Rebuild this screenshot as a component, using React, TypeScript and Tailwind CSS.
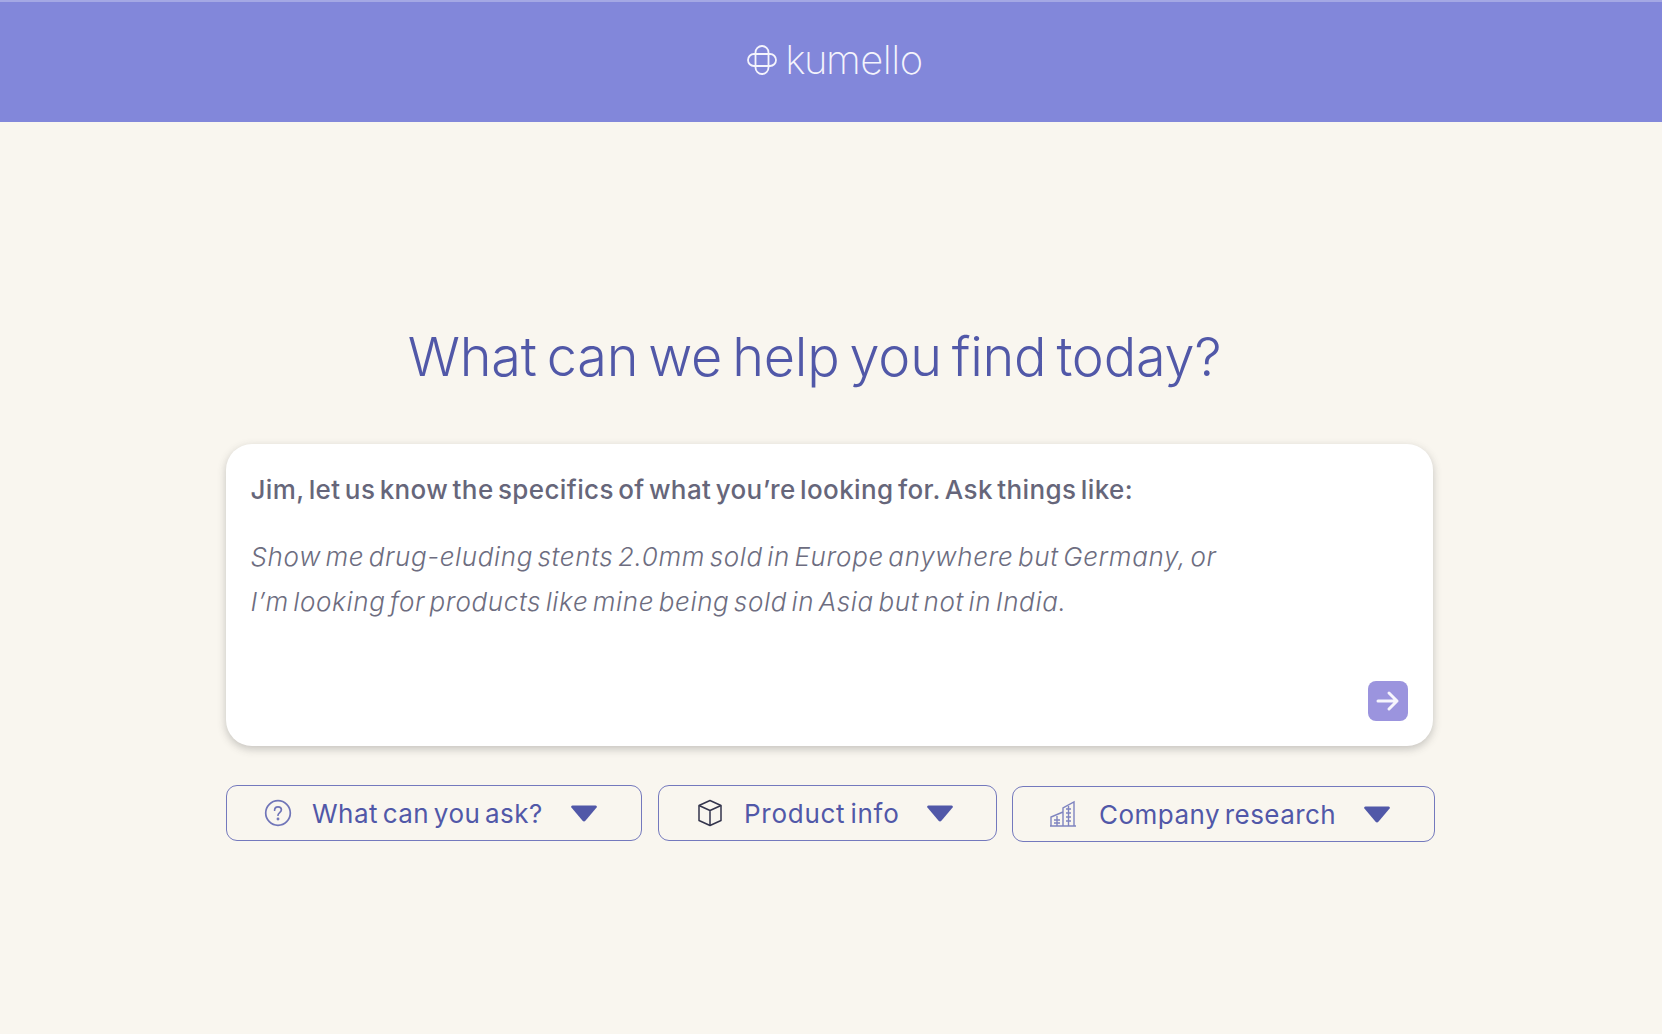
const font = { fontFamily: "Inter, 'Noto Sans', sans-serif" };

function Caret() {
  return (
    <svg width="28" height="19" viewBox="0 0 28 19" className="shrink-0">
      <path d="M2.500 1.500h23c1.200 0 1.800 1.200 1.100 2.100L15.400 16.800c-.7.800-2.100.8-2.800 0L1.400 3.600C.7 2.700 1.300 1.500 2.500 1.500z" fill="#5158a8" />
    </svg>
  );
}

function HelpIcon() {
  return (
    <svg width="28" height="28" viewBox="0 0 28 28" fill="none" stroke="#7075b8" strokeWidth="1.700" strokeLinecap="round" className="shrink-0">
      <circle cx="14" cy="14" r="12.300" />
      <path d="M10.600 11.200c0-2.100 1.500-3.400 3.400-3.400s3.400 1.200 3.400 3c0 2.700-3.400 2.800-3.400 5.400" />
      <circle cx="14" cy="20" r=".6" />
    </svg>
  );
}

function BoxIcon() {
  return (
    <svg width="28" height="28" viewBox="0 0 28 28" fill="none" stroke="#33344c" strokeWidth="1.500" strokeLinejoin="round" className="shrink-0">
      <path d="M14 1.500 25 6.500v15l-11 5-11-5v-15z" />
      <path d="M3 6.500l11 5 11-5M14 11.500v15" />
    </svg>
  );
}

function BuildingIcon() {
  return (
    <svg width="28" height="28" viewBox="0 0 28 28" fill="none" stroke="#7f84c0" strokeWidth="1.400" className="shrink-0">
      <path d="M14 26V8L25 2v24M2 26V17l12-5M1 26h26" />
      <path d="M17 9h5M17 13h5M17 17h5M17 21h5M19.500 6v20M5 20h6M5 23h6M8 16v10" />
    </svg>
  );
}

function LogoMark() {
  return (
    <svg width="30" height="30" viewBox="0 0 30 30" fill="none" stroke="#f4f4fc" strokeWidth="1.800" className="shrink-0">
      <rect x="1" y="9" width="28" height="12" rx="6" />
      <rect x="8.500" y="1" width="13" height="28" rx="6.500" />
    </svg>
  );
}

function PillButton({ icon, label, className, textClass }: { icon: React.ReactNode; label: string; className: string; textClass: string }) {
  return (
    <button className={`h-[56px] flex items-center rounded-[11px] border-[1.500px] border-[#7479bd] text-[#5158a8] text-[26px] [word-spacing:-3px] ${className}`}>
      {icon}
      <span className={`mr-auto ${textClass}`}>{label}</span>
      <Caret />
    </button>
  );
}

export default function App() {
  return (
    <div className="w-full h-[1034px] bg-[#f9f6ef] flex flex-col items-center overflow-hidden" style={font}>
      <header className="w-full h-[122px] shrink-0 bg-[#8287da] border-t-2 border-[#a4a8e4] flex items-center justify-center pl-[8px] pb-[5px] text-[#f4f4fc]">
        <LogoMark />
        <span className="ml-[8px] text-[40px] font-extralight leading-none tracking-[-0.5px]">
          <span className="tracking-[-1.500px]">ku</span>mello
        </span>
      </header>

      <h1 className="mt-[201px] pr-[33px] text-[54px] leading-[68px] font-light tracking-[-0.2px] [word-spacing:-5px] text-[#5158a8]">
        What can we help you find today?
      </h1>

      <div className="ml-[-4px] mt-[53px] w-[1207px] h-[302px] shrink-0 rounded-[26px] bg-white shadow-[0_3px_8px_rgba(60,60,60,0.28)] px-[25px] pt-[30px] flex flex-col">
        <p className="text-[26px] leading-[32px] font-medium tracking-[0.4px] [word-spacing:-3px] text-[#66667a]">
          Jim, let us know the specifics of what you’re looking for. Ask things like:
        </p>
        <p className="mt-[29px] text-[26px] leading-[44.500px] font-light italic tracking-[0.65px] [word-spacing:-3.500px] text-[#6d6d80]">
          Show me drug-eluding stents 2.0mm sold in Europe anywhere but Germany, or
          <br />
          I’m looking for products like mine being sold in Asia but not in India.
        </p>
        <div className="mt-auto mb-[25px] self-end w-[40px] h-[40px] rounded-[8px] bg-[#9b94de] flex items-center justify-center">
          <svg width="24" height="22" viewBox="0 0 24 22" fill="none" stroke="#f6f5fd" strokeWidth="3" strokeLinecap="round" strokeLinejoin="round">
            <path d="M2 11h19M13 3l8 8-8 8" />
          </svg>
        </div>
      </div>

      <div className="mt-[39px] ml-[-1px] flex items-start w-[1209px] h-[58px]">
        <PillButton icon={<HelpIcon />} label="What can you ask?" textClass="ml-[20px] tracking-[0.45px]" className="w-[417px] pl-[37px] pr-[43px]" />
        <PillButton icon={<BoxIcon />} label="Product info" textClass="ml-[20px] tracking-[0.75px]" className="ml-[16px] w-[340px] pl-[37px] pr-[42px]" />
        <PillButton icon={<BuildingIcon />} label="Company research" textClass="ml-[22px] tracking-[0.45px]" className="ml-[15px] mt-[1px] w-[424px] pl-[36px] pr-[43px]" />
      </div>
    </div>
  );
}
